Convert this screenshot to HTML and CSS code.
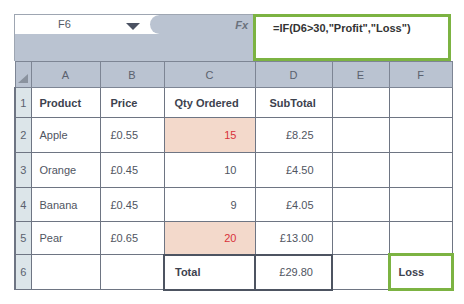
FILE: index.html
```html
<!DOCTYPE html>
<html>
  <head>
    <title>Spreadsheet IF formula</title>
    <link rel="stylesheet" href="styles.css">
  </head>
  <body>
    <div class="sheet">
      <div class="top">
        <div class="top-left">
          <div class="namebar">
            <div class="namebox">
              <span class="cell-name">F6</span>
              <span class="arrow"></span>
            </div>
            <div class="fxbar"><span class="fx">Fx</span></div>
          </div>
          <div class="band"></div>
        </div>
        <div class="formula">=IF(D6&gt;30,"Profit","Loss")</div>
      </div>

      <table class="grid">
        <colgroup>
          <col class="c-row">
          <col class="c-a">
          <col class="c-b">
          <col class="c-c">
          <col class="c-d">
          <col class="c-e">
          <col class="c-f">
        </colgroup>
        <thead>
          <tr>
            <th class="corner"><span class="corner-tri"></span></th>
            <th>A</th>
            <th>B</th>
            <th>C</th>
            <th>D</th>
            <th>E</th>
            <th>F</th>
          </tr>
        </thead>
        <tbody>
          <tr class="r1">
            <td class="rownum">1</td>
            <td class="bold">Product</td>
            <td class="bold">Price</td>
            <td class="bold">Qty Ordered</td>
            <td class="bold sub">SubTotal</td>
            <td></td>
            <td></td>
          </tr>
          <tr>
            <td class="rownum">2</td>
            <td>Apple</td>
            <td>£0.55</td>
            <td class="num flag">15</td>
            <td class="money">£8.25</td>
            <td></td>
            <td></td>
          </tr>
          <tr>
            <td class="rownum">3</td>
            <td>Orange</td>
            <td>£0.45</td>
            <td class="num">10</td>
            <td class="money">£4.50</td>
            <td></td>
            <td></td>
          </tr>
          <tr class="r4">
            <td class="rownum">4</td>
            <td>Banana</td>
            <td>£0.45</td>
            <td class="num">9</td>
            <td class="money">£4.05</td>
            <td></td>
            <td></td>
          </tr>
          <tr class="r5">
            <td class="rownum">5</td>
            <td>Pear</td>
            <td>£0.65</td>
            <td class="num flag">20</td>
            <td class="money">£13.00</td>
            <td></td>
            <td></td>
          </tr>
          <tr class="r6">
            <td class="rownum">6</td>
            <td></td>
            <td></td>
            <td class="bold total">Total</td>
            <td class="money total">£29.80</td>
            <td></td>
            <td class="bold result">Loss</td>
          </tr>
        </tbody>
      </table>
    </div>
  </body>
</html>
```

FILE: styles.css
```css
body {
  margin: 0;
  font-family: "Liberation Sans", Arial, sans-serif;
  background: #fff;
}

.sheet {
  margin: 14px 0 0 14px;
  width: 437px;
}

.top {
  display: flex;
  height: 47px;
}

.top-left {
  width: 239px;
  display: flex;
  flex-direction: column;
}

.namebar {
  height: 20px;
  display: flex;
  box-sizing: border-box;
  border-top: 1px solid #9ea6b2;
  border-left: 1px solid #9ea6b2;
  background: #fff;
}

.namebox {
  width: 135px;
  position: relative;
  font-size: 11px;
  color: #555b66;
}

.cell-name {
  position: absolute;
  left: 43px;
  top: 3px;
}

.arrow {
  position: absolute;
  left: 111px;
  top: 8px;
  width: 0;
  height: 0;
  border-left: 7px solid transparent;
  border-right: 7px solid transparent;
  border-top: 7px solid #4b5262;
}

.fxbar {
  flex: 1;
  background: #bac3d1;
  border-radius: 10px 0 0 10px;
  text-align: right;
  padding-right: 5px;
}

.fx {
  font-size: 11px;
  font-style: italic;
  font-weight: bold;
  color: #6a717c;
  line-height: 19px;
}

.band {
  flex: 1;
  background: #bac3d1;
  border-left: 1px solid #9ea6b2;
}

.formula {
  width: 198px;
  box-sizing: border-box;
  border: 3px solid #7cb342;
  padding: 5px 0 0 17px;
  font-size: 11px;
  font-weight: bold;
  color: #333;
}

.grid {
  width: 437px;
  table-layout: fixed;
  border-collapse: collapse;
  font-size: 11px;
  color: #50555f;
}

.c-row { width: 16px; }
.c-a { width: 69px; }
.c-b { width: 64px; }
.c-c { width: 91px; }
.c-d { width: 77px; }
.c-e { width: 57px; }
.c-f { width: 63px; }

.grid th,
.grid td {
  border: 1px solid #6e7583;
  padding: 0 0 0 8px;
  text-align: left;
  height: 35px;
  box-sizing: border-box;
}

.grid th {
  height: 26px;
  background: #bac3d1;
  text-align: center;
  padding: 0;
  font-weight: normal;
  color: #5a616e;
  border-color: #7d8594;
}

.grid th.corner {
  position: relative;
}

.corner-tri {
  position: absolute;
  right: 3px;
  bottom: 4px;
  width: 0;
  height: 0;
  border-left: 10px solid transparent;
  border-bottom: 9px solid #8a929e;
}

.grid td.rownum {
  background: #dce5e9;
  padding: 0;
  text-align: center;
  color: #5a616e;
  border-left: 2px solid #6e7583;
}

.r1 td { height: 30px; }
.r4 td { height: 34px; }
.r5 td { height: 33px; }
.r6 td { height: 35px; }

.grid td.bold {
  font-weight: bold;
  color: #3d424e;
}

.grid td.sub {
  padding-left: 14px;
}

.grid td:nth-child(3) {
  padding-left: 10px;
}

.grid td:nth-child(4) {
  padding-left: 10px;
}

.grid td.num {
  text-align: right;
  padding-right: 18px;
}

.grid td.money {
  text-align: right;
  padding-right: 18px;
}

.grid td.flag {
  background: #f3d9cb;
  color: #d8323a;
}

.grid td.total {
  border: 2px solid #4d5461;
}

.grid td.result {
  border: 3px solid #7cb342;
}
```
